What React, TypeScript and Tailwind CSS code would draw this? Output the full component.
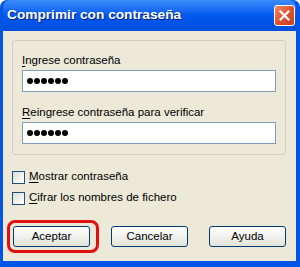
import React from "react";

function Dots() {
  return (
    <div className="flex items-center gap-[1px] pl-[4px]">
      {[0, 1, 2, 3, 4, 5].map((i) => (
        <span key={i} className="h-[6px] w-[6px] rounded-full bg-black" />
      ))}
    </div>
  );
}

function Check({ label, access }: { label: string; access: string }) {
  return (
    <div className="flex h-[14px] items-center gap-[4px]">
      <span className="h-[13px] w-[13px] border border-[#1c5180] bg-gradient-to-br from-[#dcdcd5] to-white" />
      <span>
        <span className="underline underline-offset-2">{access}</span>
        {label}
      </span>
    </div>
  );
}

function XpButton({ children }: { children: React.ReactNode }) {
  return (
    <button className="flex h-[21px] w-[77px] items-center justify-center rounded-[3px] border border-[#003c74] bg-gradient-to-b from-white to-[#e3e3db] text-black">
      {children}
    </button>
  );
}

export default function App() {
  return (
    <div
      className="flex h-[267px] w-[300px] flex-col rounded-t-[7px] bg-[#0055e5] pb-[6px] pl-[3px] pr-[4px] text-[11.5px] text-black"
      style={{ fontFamily: '"Liberation Sans", Arial, sans-serif' }}
    >
      <div className="flex h-[31px] items-center justify-between rounded-t-[7px] bg-gradient-to-b from-[#3d8cfc] via-[#0058ee] to-[#0050dc] pl-[4px] pr-[1px]">
        <span className="text-[13.7px] font-bold text-white [text-shadow:1px_1px_0_#0a1f7a]">
          Comprimir con contraseña
        </span>
        <div className="flex h-[21px] w-[21px] items-center justify-center rounded-[3px] border border-white bg-gradient-to-br from-[#f08a6a] via-[#e0522e] to-[#c8401e]">
          <svg width="11" height="11" viewBox="0 0 11 11">
            <path d="M1.5 1.5 L9.5 9.5 M9.5 1.5 L1.5 9.5" stroke="white" strokeWidth="2.2" strokeLinecap="square" />
          </svg>
        </div>
      </div>
      <div className="flex flex-1 flex-col bg-[#ece9d8] pl-[9px] pr-[10px] pt-[9px]">
        <div className="flex h-[115px] flex-col rounded-[3px] border border-[#d0d0bf] px-[9px] pt-[12px]">
          <span className="leading-[14px]">
            <span className="underline underline-offset-2">I</span>ngrese contraseña
          </span>
          <div className="mt-[3px] flex h-[22px] items-center border border-[#7f9db9] bg-white">
            <Dots />
          </div>
          <span className="mt-[13px] leading-[14px]">
            <span className="underline underline-offset-2">R</span>eingrese contraseña para verificar
          </span>
          <div className="mt-[3px] flex h-[22px] items-center border border-[#7f9db9] bg-white">
            <Dots />
          </div>
        </div>
        <div className="mt-[15px] flex flex-col gap-[7px]">
          <Check access="M" label="ostrar contraseña" />
          <Check access="C" label="ifrar los nombres de fichero" />
        </div>
        <div className="mt-[21px] flex justify-between pl-[1px]">
          <div className="relative">
            <XpButton>Aceptar</XpButton>
            <div className="absolute -bottom-[6px] -left-[6px] -right-[9px] -top-[6px] rounded-[8px] border-[3px] border-[#e01010]" />
          </div>
          <XpButton>Cancelar</XpButton>
          <XpButton>Ayuda</XpButton>
        </div>
      </div>
    </div>
  );
}
